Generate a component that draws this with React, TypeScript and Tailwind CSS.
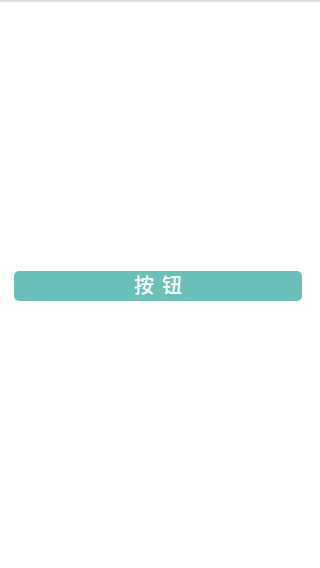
export default function App() {
  return (
    <div
      className="h-[568px] border-t-2 border-[#dcdcdc] bg-white flex items-center pl-[14px] pt-[2px]"
      style={{ fontFamily: '"Noto Sans CJK SC", "Noto Sans", sans-serif' }}
    >
      <button className="w-[288px] h-[30px] rounded-[5px] bg-[#6abfb8] text-white text-[20px] font-medium leading-none flex items-center justify-center gap-[8px] pb-[3px]">
        <span>按</span>
        <span>钮</span>
      </button>
    </div>
  );
}
